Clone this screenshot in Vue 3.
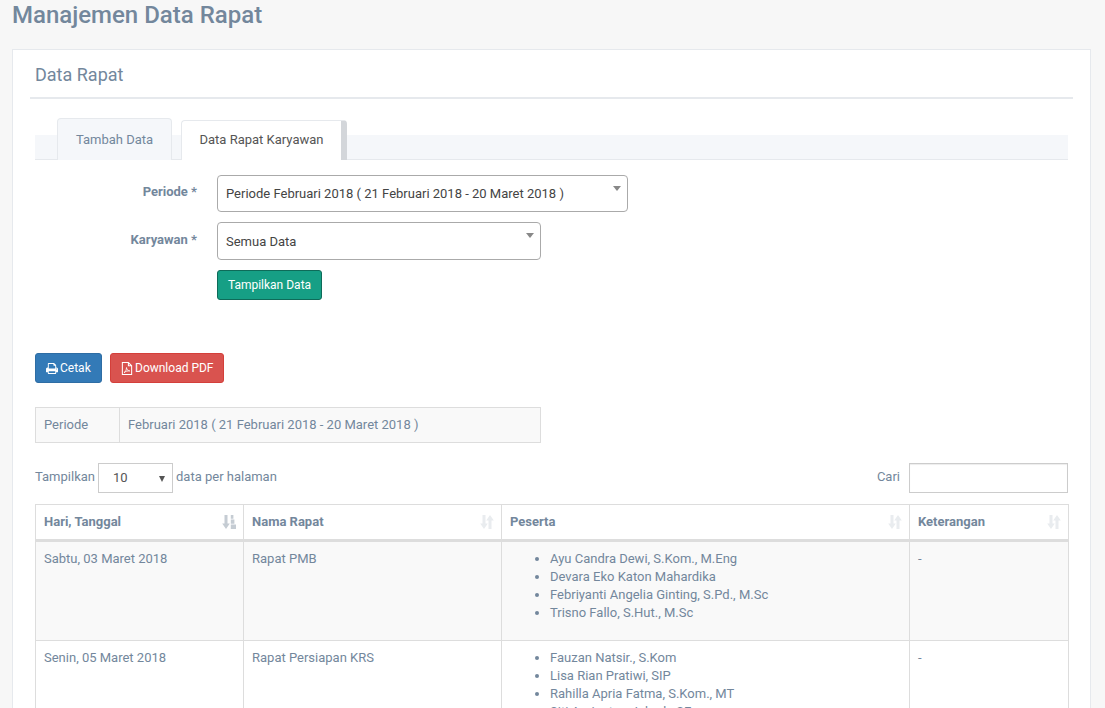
<script setup>
const rows = [
  { date: 'Sabtu, 03 Maret 2018', name: 'Rapat PMB', people: ['Ayu Candra Dewi, S.Kom., M.Eng', 'Devara Eko Katon Mahardika', 'Febriyanti Angelia Ginting, S.Pd., M.Sc', 'Trisno Fallo, S.Hut., M.Sc'], note: '-' },
  { date: 'Senin, 05 Maret 2018', name: 'Rapat Persiapan KRS', people: ['Fauzan Natsir., S.Kom', 'Lisa Rian Pratiwi, SIP', 'Rahilla Apria Fatma, S.Kom., MT', 'Siti Aminatun Jahrah, SE'], note: '-' }
]
const heads = ['Nama Rapat', 'Peserta', 'Keterangan']
</script>

<template>
  <div class="page">
    <h1 class="title">Manajemen Data Rapat</h1>
    <section class="panel">
      <h2 class="panel-title">Data Rapat</h2>
      <div class="tabs">
        <div class="tab tab-idle">Tambah Data</div>
        <div class="tab tab-active">Data Rapat Karyawan</div>
      </div>

      <div class="form">
        <div class="form-row">
          <label class="label">Periode *</label>
          <div class="select select-wide">Periode Februari 2018 ( 21 Februari 2018 - 20 Maret 2018 )<i class="caret"></i></div>
        </div>
        <div class="form-row">
          <label class="label label-low">Karyawan *</label>
          <div class="select select-mid">Semua Data<i class="caret"></i></div>
        </div>
        <div class="form-row">
          <span class="label"></span>
          <button class="btn btn-green">Tampilkan Data</button>
        </div>
      </div>

      <div class="actions">
        <button class="btn btn-blue">
          <svg class="ico" viewBox="0 0 1664 1792" width="12" height="13"><path fill="currentColor" d="M384 1536h896v-256H384v256zm0-640h896V512h-160q-40 0-68-28t-28-68V256H384v640zm1152 64q0-26-19-45t-45-19-45 19-19 45 19 45 45 19 45-19 19-45zm128 0v416q0 13-9.500 22.500T1632 1408h-224v160q0 40-28 68t-68 28H352q-40 0-68-28t-28-68v-160H32q-13 0-22.500-9.500T0 1376V960q0-79 56.500-135.500T192 768h64V224q0-40 28-68t68-28h672q40 0 88 20t76 48l152 152q28 28 48 76t20 88v256h64q79 0 135.500 56.500T1664 960z"/></svg>
          Cetak
        </button>
        <button class="btn btn-red">
          <svg class="ico" viewBox="0 0 12 14" width="12" height="13"><path fill="none" stroke="currentColor" stroke-width="1.1" d="M1 .6h6.500L11 4v9.400H1zM7.500.6V4H11"/><path fill="none" stroke="currentColor" stroke-width=".9" d="M2.800 11.500c1.500-.8 2.600-3 2.700-5.500 .1 2 1.200 3.300 3.500 3.600-2-.2-4.500.3-6.200 1.900z"/></svg>
          Download PDF
        </button>
      </div>

      <div class="info">
        <div class="info-key">Periode</div>
        <div class="info-val">Februari 2018 ( 21 Februari 2018 - 20 Maret 2018 )</div>
      </div>

      <div class="toolbar">
        <div class="length">
          Tampilkan
          <div class="mini-select">10<i class="mini-caret"></i></div>
          data per halaman
        </div>
        <div class="search">
          Cari
          <div class="search-box"></div>
        </div>
      </div>

      <table class="table">
        <colgroup>
          <col class="c1" /><col class="c2" /><col class="c3" /><col class="c4" />
        </colgroup>
        <thead>
          <tr>
            <th>
              Hari, Tanggal
              <svg class="sort sort-on" viewBox="0 0 14 14" width="14" height="14"><path fill="currentColor" d="M2.500 0h3v8.500h2.300L4 14 .2 8.500h2.300zM8.800 0h2.600v3.800H8.800zM8.800 4.500h3.600v4.300H8.800zM8.800 9.500h5.200V14H8.800z"/></svg>
            </th>
            <th v-for="h in heads" :key="h">
              {{ h }}
              <svg class="sort" viewBox="0 0 14 14" width="14" height="14"><path fill="currentColor" d="M2.500 0h3v8.500h2.300L4 14 .2 8.500h2.300zM8.500 14h3V5.500h2.300L10 0 6.200 5.500h2.300z"/></svg>
            </th>
          </tr>
        </thead>
        <tbody>
          <tr v-for="(r, i) in rows" :key="r.date" :class="{ odd: i === 0 }">
            <td>{{ r.date }}</td>
            <td>{{ r.name }}</td>
            <td>
              <ul class="people">
                <li v-for="p in r.people" :key="p">{{ p }}</li>
              </ul>
            </td>
            <td>{{ r.note }}</td>
          </tr>
        </tbody>
      </table>
    </section>
  </div>
</template>

<style>
html, body { margin: 0; height: 708px; overflow: hidden; background: #f7f7f7; }
</style>

<style scoped>
.page {
  height: 708px;
  overflow: hidden;
  box-sizing: border-box;
  padding: 0 14px 0 12px;
  font-family: Roboto, "Liberation Sans", sans-serif;
  font-size: 13px;
  line-height: 18px;
  color: #73879c;
}
.title {
  margin: 0;
  height: 49px;
  padding-top: 1px;
  box-sizing: border-box;
  font-size: 24px;
  line-height: 29px;
  font-weight: 500;
}
.panel {
  background: #fff;
  border: 1px solid #e6e9ed;
  padding: 0 22px;
  height: 800px;
}
.panel-title {
  margin: 0 -5px;
  height: 33px;
  padding: 14px 0 0 5px;
  box-sizing: content-box;
  border-bottom: 2px solid #e6e9ed;
  font-size: 18px;
  line-height: 22px;
  font-weight: 400;
}
.tabs {
  margin-top: 19px;
  height: 42px;
  box-sizing: border-box;
  display: flex;
  align-items: flex-end;
  gap: 9px;
  padding-left: 22px;
  border-bottom: 1px solid #e6e9ed;
  background: linear-gradient(#fff 17px, #f5f7fa 17px);
}
.tab {
  box-sizing: border-box;
  border: 1px solid #e6e9ed;
  border-bottom: 0;
  border-radius: 4px 4px 0 0;
  margin-bottom: -1px;
}
.tab-idle {
  width: 115px;
  height: 42px;
  padding-top: 12px;
  text-align: center;
  background: #f5f7fa;
}
.tab-active {
  width: 166px;
  height: 40px;
  padding-top: 10px;
  text-align: center;
  background: #fff;
  color: #555;
  border-right: 6px solid #d3d6da;
}
.form { margin-top: 15px; }
.form-row { display: flex; margin-bottom: 10px; }
.label {
  width: 182px;
  flex: none;
  padding-top: 8px;
  padding-right: 20px;
  box-sizing: border-box;
  text-align: right;
  font-weight: 700;
}
.label-low { padding-top: 9px; }
.select {
  position: relative;
  box-sizing: border-box;
  height: 38px;
  padding: 10px 8px 0;
  border: 1px solid #aaa;
  border-radius: 4px;
  background: #fff;
  color: #444;
}
.select-wide { width: 411px; height: 37px; padding-top: 9px; }
.select-mid { width: 324px; }
.caret {
  position: absolute;
  right: 6px;
  top: 10px;
  border-left: 4px solid transparent;
  border-right: 4px solid transparent;
  border-top: 5px solid #888;
}
.btn {
  display: inline-flex;
  align-items: center;
  gap: 2px;
  box-sizing: border-box;
  height: 30px;
  padding: 0 10px;
  border: 1px solid;
  border-radius: 3px;
  color: #fff;
  white-space: nowrap;
  font: 400 12px/18px Roboto, "Liberation Sans", sans-serif;
}
.btn-green { width: 105px; justify-content: center; padding: 0; background: #169f85; border-color: #0e6b59; }
.btn-blue { width: 67px; background: #337ab7; border-color: #2e6da4; }
.btn-red { width: 114px; background: #d9534f; border-color: #d43f3a; }
.actions { display: flex; gap: 8px; margin-top: 53px; }
.ico { flex: none; }
.info {
  display: flex;
  width: 506px;
  height: 36px;
  box-sizing: border-box;
  margin-top: 24px;
  border: 1px solid #ddd;
  background: #f9f9f9;
  line-height: 34px;
}
.info-key { width: 84px; flex: none; padding-left: 8px; box-sizing: border-box; border-right: 1px solid #ddd; }
.info-val { padding-left: 8px; }
.toolbar {
  display: flex;
  justify-content: space-between;
  height: 30px;
  margin-top: 20px;
}
.length { display: flex; align-items: flex-start; gap: 3px; line-height: 28px; }
.mini-select {
  position: relative;
  box-sizing: border-box;
  width: 75px;
  height: 30px;
  padding: 5px 0 0 14px;
  border: 1px solid #ccc;
  color: #555;
  line-height: 18px;
}
.mini-caret {
  position: absolute;
  right: 7px;
  top: 12px;
  border-left: 3px solid transparent;
  border-right: 3px solid transparent;
  border-top: 6px solid #555;
}
.search { display: flex; align-items: flex-start; gap: 9px; line-height: 28px; }
.search-box {
  width: 159px;
  height: 30px;
  box-sizing: border-box;
  border: 1px solid #ccc;
  box-shadow: inset 0 1px 1px rgba(0, 0, 0, .075);
}
.table {
  width: 1033px;
  margin-top: 11px;
  border-collapse: collapse;
  table-layout: fixed;
}
.c1 { width: 208px; }
.c2 { width: 258px; }
.c3 { width: 408px; }
.c4 { width: 159px; }
th, td {
  border: 1px solid #ddd;
  padding: 8px;
  text-align: left;
  vertical-align: top;
  font-weight: 400;
}
th {
  position: relative;
  height: 36px;
  box-sizing: border-box;
  font-weight: 700;
  border-bottom-width: 3px;
}
.sort {
  position: absolute;
  right: 7px;
  top: 10px;
  color: #e9ecef;
}
.sort-on { color: #c5ccd3; }
.odd td { background: #f9f9f9; }
td { height: 99px; box-sizing: border-box; }
.odd td { height: 100px; }
.people { margin: 0; padding-left: 40px; }
</style>
